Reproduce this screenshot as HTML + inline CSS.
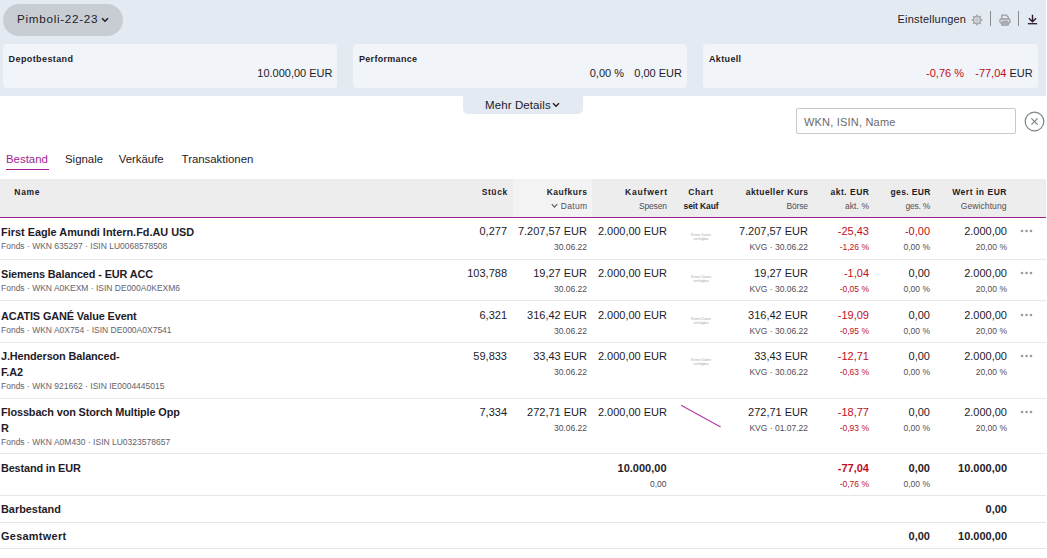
<!DOCTYPE html>
<html><head><meta charset="utf-8"><style>
html,body{margin:0;padding:0;background:#fff;}
body{width:1047px;height:558px;position:relative;overflow:hidden;font-family:"Liberation Sans", sans-serif;color:#241b28;}
.t{position:absolute;white-space:nowrap;line-height:20px;}
.r{position:absolute;}
</style></head><body>
<div class="r" style="left:0px;top:0px;width:1046px;height:96px;background:#e4eaf1;"></div>
<div class="r" style="left:3px;top:4px;width:120px;height:32px;background:#c8cdd4;border-radius:16px;"></div>
<div class="t" style="top:9.00px;font-size:11.7px;letter-spacing:0.7px;left:17.00px;">Pimboli-22-23</div>
<svg class="r" style="left:101px;top:16.5px" width="8" height="6" viewBox="0 0 8 6"><path d="M1 1.2 L4 4.2 L7 1.2" fill="none" stroke="#241b28" stroke-width="1.5"/></svg>
<div class="t" style="top:9.00px;font-size:11px;letter-spacing:0.2px;left:897.50px;">Einstellungen</div>
<svg class="r" style="left:971px;top:13.5px" width="12" height="12" viewBox="-6 -6 12 12"><g fill="#a6a6aa"><rect x="-0.85" y="-5.4" width="1.7" height="2.2" transform="rotate(0)"/><rect x="-0.85" y="-5.4" width="1.7" height="2.2" transform="rotate(45)"/><rect x="-0.85" y="-5.4" width="1.7" height="2.2" transform="rotate(90)"/><rect x="-0.85" y="-5.4" width="1.7" height="2.2" transform="rotate(135)"/><rect x="-0.85" y="-5.4" width="1.7" height="2.2" transform="rotate(180)"/><rect x="-0.85" y="-5.4" width="1.7" height="2.2" transform="rotate(225)"/><rect x="-0.85" y="-5.4" width="1.7" height="2.2" transform="rotate(270)"/><rect x="-0.85" y="-5.4" width="1.7" height="2.2" transform="rotate(315)"/></g><circle cx="0" cy="0" r="3.4" fill="none" stroke="#a6a6aa" stroke-width="1.5"/><circle cx="0" cy="0" r="1.3" fill="none" stroke="#a6a6aa" stroke-width="0.8"/></svg>
<div class="r" style="left:990px;top:11px;width:1px;height:15px;background:#8a8a90;"></div>
<svg class="r" style="left:998.5px;top:13.5px" width="12" height="12" viewBox="0 0 12 12"><g fill="none" stroke="#9c9ca2" stroke-width="1.3" stroke-linejoin="round"><path d="M2.8 5V1.2h4.6l1.9 1.9V5"/><rect x="0.9" y="5" width="10.2" height="4" rx="1.4"/><path d="M2.8 9V11h6.4V9"/><path d="M2.8 7.3h6.4"/></g></svg>
<div class="r" style="left:1018px;top:11px;width:1px;height:15px;background:#8a8a90;"></div>
<svg class="r" style="left:1027px;top:14px" width="11" height="12" viewBox="0 0 11 12"><g fill="none" stroke="#2e1a2a" stroke-width="1.4"><path d="M5.5 0.8v6.6M1.9 4.2l3.6 3.5 3.6-3.5"/><path d="M0.9 9.7h9.2" stroke-width="1.3"/></g></svg>
<div class="r" style="left:3px;top:44px;width:334px;height:44px;background:#f1f4f8;border-radius:4px;"></div>
<div class="r" style="left:353px;top:44px;width:334px;height:44px;background:#f1f4f8;border-radius:4px;"></div>
<div class="r" style="left:703px;top:44px;width:335px;height:44px;background:#f1f4f8;border-radius:4px;"></div>
<div class="t" style="top:49.00px;font-size:9px;font-weight:700;letter-spacing:0.4px;left:8.60px;">Depotbestand</div>
<div class="t" style="top:63.00px;font-size:11px;right:714.50px;text-align:right;">10.000,00 EUR</div>
<div class="t" style="top:49.00px;font-size:9px;font-weight:700;letter-spacing:0.3px;left:359.00px;">Performance</div>
<div class="t" style="top:63.00px;font-size:11px;right:423.00px;text-align:right;">0,00 %</div>
<div class="t" style="top:63.00px;font-size:11px;right:365.00px;text-align:right;">0,00 EUR</div>
<div class="t" style="top:49.00px;font-size:9px;font-weight:700;letter-spacing:0.35px;left:709.00px;">Aktuell</div>
<div class="t" style="top:63.00px;font-size:11px;color:#c00d1c;right:83.00px;text-align:right;">-0,76 %</div>
<div class="t" style="top:63.00px;font-size:11px;right:14.30px;text-align:right;"><span style="color:#c00d1c">-77,04</span> EUR</div>
<div class="r" style="left:463px;top:95px;width:120px;height:18.5px;background:#e4eaf1;border-radius:0 0 5px 5px;"></div>
<div class="t" style="top:95.00px;font-size:11.5px;letter-spacing:0.1px;left:485.00px;">Mehr Details</div>
<svg class="r" style="left:552.3px;top:102px" width="8" height="6" viewBox="0 0 8 6"><path d="M1 1.2 L4 4.2 L7 1.2" fill="none" stroke="#241b28" stroke-width="1.4"/></svg>
<div class="r" style="left:796px;top:108px;width:220px;height:26px;background:#fff;border:1px solid #c9c9c9;border-radius:2px;box-sizing:border-box;"></div>
<div class="t" style="top:112.00px;font-size:11px;color:#6a6a6a;letter-spacing:0.2px;left:804.00px;">WKN, ISIN, Name</div>
<svg class="r" style="left:1024.3px;top:111px" width="21" height="21" viewBox="0 0 21 21"><circle cx="10.5" cy="10.5" r="9.3" fill="none" stroke="#7f8787" stroke-width="1.25"/><path d="M7.4 7.4l6.2 6.2M13.6 7.4l-6.2 6.2" stroke="#7f8787" stroke-width="1.3"/></svg>
<div class="t" style="top:149.00px;font-size:11.4px;color:#a01e92;left:6.00px;">Bestand</div>
<div class="r" style="left:6px;top:168.8px;width:43px;height:1.5px;background:#a01e92;"></div>
<div class="t" style="top:149.00px;font-size:11.4px;left:65.00px;">Signale</div>
<div class="t" style="top:149.00px;font-size:11.4px;left:118.70px;">Verkäufe</div>
<div class="t" style="top:149.00px;font-size:11.4px;left:181.60px;">Transaktionen</div>
<div class="r" style="left:0px;top:179px;width:1046px;height:38px;background:#ededed;"></div>
<div class="r" style="left:513px;top:179px;width:79px;height:38px;background:#f3f3f3;"></div>
<div class="r" style="left:0px;top:217px;width:1046px;height:1px;background:#a01e92;"></div>
<div class="t" style="top:182.00px;font-size:8.5px;font-weight:700;letter-spacing:0.7px;left:14.30px;">Name</div>
<div class="t" style="top:182.00px;font-size:8.5px;font-weight:700;letter-spacing:0.6px;right:539.20px;text-align:right;">Stück</div>
<div class="t" style="top:182.00px;font-size:8.5px;font-weight:700;letter-spacing:0.5px;right:459.50px;text-align:right;">Kaufkurs</div>
<div class="t" style="top:196.00px;font-size:8.5px;color:#524d56;letter-spacing:0.3px;right:459.70px;text-align:right;">Datum</div>
<svg class="r" style="left:551px;top:203px" width="7" height="6" viewBox="0 0 7 6"><path d="M0.8 1.2 L3.5 4.2 L6.2 1.2" fill="none" stroke="#5f5b63" stroke-width="1.2"/></svg>
<div class="t" style="top:182.00px;font-size:8.5px;font-weight:700;letter-spacing:0.8px;right:379.20px;text-align:right;">Kaufwert</div>
<div class="t" style="top:196.00px;font-size:8.5px;color:#524d56;letter-spacing:-0.15px;right:380.15px;text-align:right;">Spesen</div>
<div class="t" style="top:182.00px;font-size:8.5px;font-weight:700;letter-spacing:0.7px;left:601.00px;width:200px;text-align:center;">Chart</div>
<div class="t" style="top:196.00px;font-size:8.5px;font-weight:700;letter-spacing:-0.1px;left:601.00px;width:200px;text-align:center;">seit Kauf</div>
<div class="t" style="top:182.00px;font-size:8.5px;font-weight:700;letter-spacing:0.43px;right:238.57px;text-align:right;">aktueller Kurs</div>
<div class="t" style="top:196.00px;font-size:8.5px;color:#524d56;letter-spacing:-0.15px;right:239.15px;text-align:right;">Börse</div>
<div class="t" style="top:182.00px;font-size:8.5px;font-weight:700;letter-spacing:0.5px;right:177.50px;text-align:right;">akt. EUR</div>
<div class="t" style="top:196.00px;font-size:8.5px;color:#524d56;letter-spacing:0.1px;right:177.90px;text-align:right;">akt. %</div>
<div class="t" style="top:182.00px;font-size:8.5px;font-weight:700;letter-spacing:0.37px;right:116.23px;text-align:right;">ges. EUR</div>
<div class="t" style="top:196.00px;font-size:8.5px;color:#524d56;letter-spacing:-0.2px;right:116.80px;text-align:right;">ges. %</div>
<div class="t" style="top:182.00px;font-size:8.5px;font-weight:700;letter-spacing:0.54px;right:39.96px;text-align:right;">Wert in EUR</div>
<div class="t" style="top:196.00px;font-size:8.5px;color:#524d56;letter-spacing:0.1px;right:40.40px;text-align:right;">Gewichtung</div>
<div class="t" style="top:222.00px;font-size:10.9px;font-weight:700;left:1.00px;">First Eagle Amundi Intern.Fd.AU USD</div>
<div class="t" style="top:236.00px;font-size:8.5px;color:#66616a;left:1.00px;">Fonds · WKN 635297 · ISIN LU0068578508</div>
<div class="t" style="top:221.00px;font-size:11px;right:540.00px;text-align:right;">0,277</div>
<div class="t" style="top:221.00px;font-size:11px;right:460.00px;text-align:right;">7.207,57 EUR</div>
<div class="t" style="top:237.00px;font-size:8.5px;color:#524d56;right:460.00px;text-align:right;">30.06.22</div>
<div class="t" style="top:221.00px;font-size:11px;right:380.00px;text-align:right;">2.000,00 EUR</div>
<div class="t" style="top:221.00px;font-size:11px;right:239.00px;text-align:right;">7.207,57 EUR</div>
<div class="t" style="top:237.00px;font-size:8.5px;color:#524d56;right:239.00px;text-align:right;">KVG · 30.06.22</div>
<div class="t" style="top:221.00px;font-size:11px;color:#c00d1c;right:178.00px;text-align:right;">-25,43</div>
<div class="t" style="top:237.00px;font-size:8.5px;color:#c00d1c;right:178.00px;text-align:right;">-1,26 %</div>
<div class="t" style="top:221.00px;font-size:11px;color:#c00d1c;right:117.00px;text-align:right;">-0,00</div>
<div class="t" style="top:237.00px;font-size:8.5px;color:#524d56;right:117.00px;text-align:right;">0,00 %</div>
<div class="t" style="top:221.00px;font-size:11px;right:40.00px;text-align:right;">2.000,00</div>
<div class="t" style="top:237.00px;font-size:8.5px;color:#524d56;right:40.00px;text-align:right;">20,00 %</div>
<svg class="r" style="left:1020px;top:228.7px" width="13" height="4" viewBox="0 0 13 4"><g fill="#9a9a9a"><circle cx="2" cy="2" r="1.3"/><circle cx="6.5" cy="2" r="1.3"/><circle cx="11" cy="2" r="1.3"/></g></svg>
<div class="t" style="left:671px;width:60px;text-align:center;top:232.5px;font-size:3.6px;line-height:4px;color:#a8a8a8">Keine Daten<br>verfügbar</div>
<div class="r" style="left:0px;top:259px;width:1046px;height:1px;background:#e8e8e8;"></div>
<div class="t" style="top:264.00px;font-size:10.9px;font-weight:700;letter-spacing:-0.12px;left:1.00px;">Siemens Balanced - EUR ACC</div>
<div class="t" style="top:278.00px;font-size:8.5px;color:#66616a;left:1.00px;">Fonds · WKN A0KEXM · ISIN DE000A0KEXM6</div>
<div class="t" style="top:263.00px;font-size:11px;right:540.00px;text-align:right;">103,788</div>
<div class="t" style="top:263.00px;font-size:11px;right:460.00px;text-align:right;">19,27 EUR</div>
<div class="t" style="top:279.00px;font-size:8.5px;color:#524d56;right:460.00px;text-align:right;">30.06.22</div>
<div class="t" style="top:263.00px;font-size:11px;right:380.00px;text-align:right;">2.000,00 EUR</div>
<div class="t" style="top:263.00px;font-size:11px;right:239.00px;text-align:right;">19,27 EUR</div>
<div class="t" style="top:279.00px;font-size:8.5px;color:#524d56;right:239.00px;text-align:right;">KVG · 30.06.22</div>
<div class="t" style="top:263.00px;font-size:11px;color:#c00d1c;right:178.00px;text-align:right;">-1,04</div>
<div class="t" style="top:279.00px;font-size:8.5px;color:#c00d1c;right:178.00px;text-align:right;">-0,05 %</div>
<div class="t" style="top:263.00px;font-size:11px;right:117.00px;text-align:right;">0,00</div>
<div class="t" style="top:279.00px;font-size:8.5px;color:#524d56;right:117.00px;text-align:right;">0,00 %</div>
<div class="t" style="top:263.00px;font-size:11px;right:40.00px;text-align:right;">2.000,00</div>
<div class="t" style="top:279.00px;font-size:8.5px;color:#524d56;right:40.00px;text-align:right;">20,00 %</div>
<svg class="r" style="left:1020px;top:270.7px" width="13" height="4" viewBox="0 0 13 4"><g fill="#9a9a9a"><circle cx="2" cy="2" r="1.3"/><circle cx="6.5" cy="2" r="1.3"/><circle cx="11" cy="2" r="1.3"/></g></svg>
<div class="t" style="left:671px;width:60px;text-align:center;top:274.5px;font-size:3.6px;line-height:4px;color:#a8a8a8">Keine Daten<br>verfügbar</div>
<div class="r" style="left:0px;top:300px;width:1046px;height:1px;background:#e8e8e8;"></div>
<div class="t" style="top:306.00px;font-size:10.9px;font-weight:700;letter-spacing:-0.12px;left:1.00px;">ACATIS GANÉ Value Event</div>
<div class="t" style="top:320.00px;font-size:8.5px;color:#66616a;left:1.00px;">Fonds · WKN A0X754 · ISIN DE000A0X7541</div>
<div class="t" style="top:305.00px;font-size:11px;right:540.00px;text-align:right;">6,321</div>
<div class="t" style="top:305.00px;font-size:11px;right:460.00px;text-align:right;">316,42 EUR</div>
<div class="t" style="top:321.00px;font-size:8.5px;color:#524d56;right:460.00px;text-align:right;">30.06.22</div>
<div class="t" style="top:305.00px;font-size:11px;right:380.00px;text-align:right;">2.000,00 EUR</div>
<div class="t" style="top:305.00px;font-size:11px;right:239.00px;text-align:right;">316,42 EUR</div>
<div class="t" style="top:321.00px;font-size:8.5px;color:#524d56;right:239.00px;text-align:right;">KVG · 30.06.22</div>
<div class="t" style="top:305.00px;font-size:11px;color:#c00d1c;right:178.00px;text-align:right;">-19,09</div>
<div class="t" style="top:321.00px;font-size:8.5px;color:#c00d1c;right:178.00px;text-align:right;">-0,95 %</div>
<div class="t" style="top:305.00px;font-size:11px;right:117.00px;text-align:right;">0,00</div>
<div class="t" style="top:321.00px;font-size:8.5px;color:#524d56;right:117.00px;text-align:right;">0,00 %</div>
<div class="t" style="top:305.00px;font-size:11px;right:40.00px;text-align:right;">2.000,00</div>
<div class="t" style="top:321.00px;font-size:8.5px;color:#524d56;right:40.00px;text-align:right;">20,00 %</div>
<svg class="r" style="left:1020px;top:312.7px" width="13" height="4" viewBox="0 0 13 4"><g fill="#9a9a9a"><circle cx="2" cy="2" r="1.3"/><circle cx="6.5" cy="2" r="1.3"/><circle cx="11" cy="2" r="1.3"/></g></svg>
<div class="t" style="left:671px;width:60px;text-align:center;top:316.5px;font-size:3.6px;line-height:4px;color:#a8a8a8">Keine Daten<br>verfügbar</div>
<div class="r" style="left:0px;top:342px;width:1046px;height:1px;background:#e8e8e8;"></div>
<div class="t" style="top:346.00px;font-size:10.9px;font-weight:700;letter-spacing:-0.12px;left:1.00px;">J.Henderson Balanced-</div>
<div class="t" style="top:362.00px;font-size:10.9px;font-weight:700;letter-spacing:-0.12px;left:1.00px;">F.A2</div>
<div class="t" style="top:376.00px;font-size:8.5px;color:#66616a;left:1.00px;">Fonds · WKN 921662 · ISIN IE0004445015</div>
<div class="t" style="top:346.00px;font-size:11px;right:540.00px;text-align:right;">59,833</div>
<div class="t" style="top:346.00px;font-size:11px;right:460.00px;text-align:right;">33,43 EUR</div>
<div class="t" style="top:362.00px;font-size:8.5px;color:#524d56;right:460.00px;text-align:right;">30.06.22</div>
<div class="t" style="top:346.00px;font-size:11px;right:380.00px;text-align:right;">2.000,00 EUR</div>
<div class="t" style="top:346.00px;font-size:11px;right:239.00px;text-align:right;">33,43 EUR</div>
<div class="t" style="top:362.00px;font-size:8.5px;color:#524d56;right:239.00px;text-align:right;">KVG · 30.06.22</div>
<div class="t" style="top:346.00px;font-size:11px;color:#c00d1c;right:178.00px;text-align:right;">-12,71</div>
<div class="t" style="top:362.00px;font-size:8.5px;color:#c00d1c;right:178.00px;text-align:right;">-0,63 %</div>
<div class="t" style="top:346.00px;font-size:11px;right:117.00px;text-align:right;">0,00</div>
<div class="t" style="top:362.00px;font-size:8.5px;color:#524d56;right:117.00px;text-align:right;">0,00 %</div>
<div class="t" style="top:346.00px;font-size:11px;right:40.00px;text-align:right;">2.000,00</div>
<div class="t" style="top:362.00px;font-size:8.5px;color:#524d56;right:40.00px;text-align:right;">20,00 %</div>
<svg class="r" style="left:1020px;top:353.7px" width="13" height="4" viewBox="0 0 13 4"><g fill="#9a9a9a"><circle cx="2" cy="2" r="1.3"/><circle cx="6.5" cy="2" r="1.3"/><circle cx="11" cy="2" r="1.3"/></g></svg>
<div class="t" style="left:671px;width:60px;text-align:center;top:357.5px;font-size:3.6px;line-height:4px;color:#a8a8a8">Keine Daten<br>verfügbar</div>
<div class="r" style="left:0px;top:398px;width:1046px;height:1px;background:#e8e8e8;"></div>
<div class="t" style="top:402.00px;font-size:10.9px;font-weight:700;letter-spacing:-0.12px;left:1.00px;">Flossbach von Storch Multiple Opp</div>
<div class="t" style="top:418.00px;font-size:10.9px;font-weight:700;letter-spacing:-0.12px;left:1.00px;">R</div>
<div class="t" style="top:432.00px;font-size:8.5px;color:#66616a;left:1.00px;">Fonds · WKN A0M430 · ISIN LU0323578657</div>
<div class="t" style="top:402.00px;font-size:11px;right:540.00px;text-align:right;">7,334</div>
<div class="t" style="top:402.00px;font-size:11px;right:460.00px;text-align:right;">272,71 EUR</div>
<div class="t" style="top:418.00px;font-size:8.5px;color:#524d56;right:460.00px;text-align:right;">30.06.22</div>
<div class="t" style="top:402.00px;font-size:11px;right:380.00px;text-align:right;">2.000,00 EUR</div>
<div class="t" style="top:402.00px;font-size:11px;right:239.00px;text-align:right;">272,71 EUR</div>
<div class="t" style="top:418.00px;font-size:8.5px;color:#524d56;right:239.00px;text-align:right;">KVG · 01.07.22</div>
<div class="t" style="top:402.00px;font-size:11px;color:#c00d1c;right:178.00px;text-align:right;">-18,77</div>
<div class="t" style="top:418.00px;font-size:8.5px;color:#c00d1c;right:178.00px;text-align:right;">-0,93 %</div>
<div class="t" style="top:402.00px;font-size:11px;right:117.00px;text-align:right;">0,00</div>
<div class="t" style="top:418.00px;font-size:8.5px;color:#524d56;right:117.00px;text-align:right;">0,00 %</div>
<div class="t" style="top:402.00px;font-size:11px;right:40.00px;text-align:right;">2.000,00</div>
<div class="t" style="top:418.00px;font-size:8.5px;color:#524d56;right:40.00px;text-align:right;">20,00 %</div>
<svg class="r" style="left:1020px;top:409.7px" width="13" height="4" viewBox="0 0 13 4"><g fill="#9a9a9a"><circle cx="2" cy="2" r="1.3"/><circle cx="6.5" cy="2" r="1.3"/><circle cx="11" cy="2" r="1.3"/></g></svg>
<div class="r" style="left:0px;top:453px;width:1046px;height:1px;background:#e8e8e8;"></div>
<svg class="r" style="left:680px;top:404px" width="42" height="24"><path d="M1.1 1.2 L40.6 23" stroke="#b03aa8" stroke-width="1.1" fill="none"/></svg>
<div class="t" style="top:458.30px;font-size:10.9px;font-weight:700;letter-spacing:-0.15px;left:1.00px;">Bestand in EUR</div>
<div class="t" style="top:458.00px;font-size:11px;font-weight:700;right:380.50px;text-align:right;">10.000,00</div>
<div class="t" style="top:473.80px;font-size:8.5px;color:#4a4455;right:380.50px;text-align:right;">0,00</div>
<div class="t" style="top:458.00px;font-size:11px;font-weight:700;color:#c00d1c;right:178.00px;text-align:right;">-77,04</div>
<div class="t" style="top:473.80px;font-size:8.5px;color:#c00d1c;right:178.00px;text-align:right;">-0,76 %</div>
<div class="t" style="top:458.00px;font-size:11px;font-weight:700;right:117.00px;text-align:right;">0,00</div>
<div class="t" style="top:473.80px;font-size:8.5px;color:#524d56;right:117.00px;text-align:right;">0,00 %</div>
<div class="t" style="top:458.00px;font-size:11px;font-weight:700;right:40.00px;text-align:right;">10.000,00</div>
<div class="r" style="left:0px;top:495px;width:1046px;height:1px;background:#e6e6e6;"></div>
<div class="t" style="top:499.00px;font-size:10.9px;font-weight:700;left:1.00px;">Barbestand</div>
<div class="t" style="top:499.00px;font-size:11px;font-weight:700;right:40.00px;text-align:right;">0,00</div>
<div class="r" style="left:0px;top:522px;width:1046px;height:1px;background:#e6e6e6;"></div>
<div class="t" style="top:525.60px;font-size:10.9px;font-weight:700;letter-spacing:0.3px;left:1.00px;">Gesamtwert</div>
<div class="t" style="top:525.60px;font-size:11px;font-weight:700;right:117.00px;text-align:right;">0,00</div>
<div class="t" style="top:525.60px;font-size:11px;font-weight:700;right:40.00px;text-align:right;">10.000,00</div>
<div class="r" style="left:0px;top:548px;width:1046px;height:1px;background:#e6e6e6;"></div>
</body></html>
